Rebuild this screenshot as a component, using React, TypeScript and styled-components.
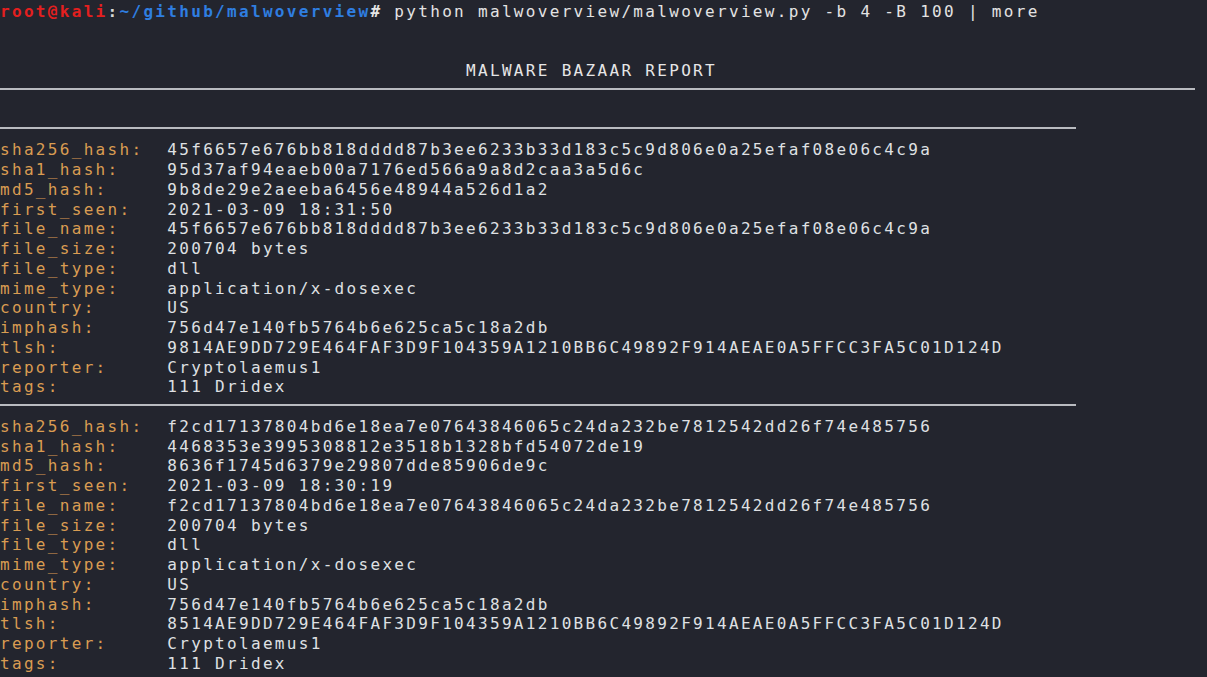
import React from "react";
import styled, { createGlobalStyle } from "styled-components";

const CELL_W = 11.95;
const CELL_H = 19.75;
const FONT = 16;

const Global = createGlobalStyle`
  html, body {
    margin: 0;
    padding: 0;
    background: #23252e;
  }
  body {
    overflow: hidden;
  }
`;

const Terminal = styled.div`
  width: 1207px;
  height: 677px;
  background: #23252e;
  color: #dcdde0;
  font-family: "DejaVu Sans Mono", "Liberation Mono", monospace;
  font-size: ${FONT}px;
  letter-spacing: ${CELL_W - FONT * 0.60205}px;
  display: flex;
  flex-direction: column;
  overflow: hidden;
`;

const Line = styled.div<{ $indent?: number; $text?: boolean }>`
  box-sizing: border-box;
  height: ${CELL_H}px;
  line-height: ${CELL_H - 4}px;
  padding-top: ${(p) => (p.$text ? 4 : 0)}px;
  white-space: pre;
  display: flex;
  align-items: center;
  padding-left: ${(p) => (p.$indent ?? 0) * CELL_W}px;
  flex-shrink: 0;
`;

const User = styled.span`
  color: #e41f1f;
  font-weight: bold;
`;

const Colon = styled.span`
  color: #d8d8d8;
  font-weight: bold;
`;

const Path = styled.span`
  color: #2f7ee0;
  font-weight: bold;
`;

const Hash = styled.span`
  color: #e6e6e6;
  font-weight: bold;
`;

const Cmd = styled.span`
  color: #e3e3e3;
`;

const Title = styled.span`
  color: #e6e6e6;
`;

const Rule = styled.div<{ $cells: number }>`
  width: ${(p) => p.$cells * CELL_W}px;
  height: 2px;
  background: #b9bbc0;
`;

const Label = styled.span`
  color: #d99c52;
  width: ${14 * CELL_W}px;
  flex-shrink: 0;
`;

const Value = styled.span`
  color: #dfe0e3;
`;

type Rec = [string, string][];

const records: Rec[] = [
  [
    ["sha256_hash:", "45f6657e676bb818dddd87b3ee6233b33d183c5c9d806e0a25efaf08e06c4c9a"],
    ["sha1_hash:", "95d37af94eaeb00a7176ed566a9a8d2caa3a5d6c"],
    ["md5_hash:", "9b8de29e2aeeba6456e48944a526d1a2"],
    ["first_seen:", "2021-03-09 18:31:50"],
    ["file_name:", "45f6657e676bb818dddd87b3ee6233b33d183c5c9d806e0a25efaf08e06c4c9a"],
    ["file_size:", "200704 bytes"],
    ["file_type:", "dll"],
    ["mime_type:", "application/x-dosexec"],
    ["country:", "US"],
    ["imphash:", "756d47e140fb5764b6e625ca5c18a2db"],
    ["tlsh:", "9814AE9DD729E464FAF3D9F104359A1210BB6C49892F914AEAE0A5FFCC3FA5C01D124D"],
    ["reporter:", "Cryptolaemus1"],
    ["tags:", "111 Dridex"],
  ],
  [
    ["sha256_hash:", "f2cd17137804bd6e18ea7e07643846065c24da232be7812542dd26f74e485756"],
    ["sha1_hash:", "4468353e3995308812e3518b1328bfd54072de19"],
    ["md5_hash:", "8636f1745d6379e29807dde85906de9c"],
    ["first_seen:", "2021-03-09 18:30:19"],
    ["file_name:", "f2cd17137804bd6e18ea7e07643846065c24da232be7812542dd26f74e485756"],
    ["file_size:", "200704 bytes"],
    ["file_type:", "dll"],
    ["mime_type:", "application/x-dosexec"],
    ["country:", "US"],
    ["imphash:", "756d47e140fb5764b6e625ca5c18a2db"],
    ["tlsh:", "8514AE9DD729E464FAF3D9F104359A1210BB6C49892F914AEAE0A5FFCC3FA5C01D124D"],
    ["reporter:", "Cryptolaemus1"],
    ["tags:", "111 Dridex"],
  ],
];

export default function App() {
  return (
    <>
      <Global />
      <Terminal>
        <Line $text>
          <User>root@kali</User>
          <Colon>:</Colon>
          <Path>~/github/malwoverview</Path>
          <Hash>#</Hash>
          <Cmd> python malwoverview/malwoverview.py -b 4 -B 100 | more</Cmd>
        </Line>
        <Line />
        <Line />
        <Line $text $indent={39}>
          <Title>MALWARE BAZAAR REPORT</Title>
        </Line>
        <Line>
          <Rule $cells={100} />
        </Line>
        <Line />
        {records.map((rec, i) => (
          <React.Fragment key={i}>
            <Line>
              <Rule $cells={90} />
            </Line>
            {rec.map(([k, v]) => (
              <Line $text key={k}>
                <Label>{k}</Label>
                <Value>{v}</Value>
              </Line>
            ))}
          </React.Fragment>
        ))}
      </Terminal>
    </>
  );
}
